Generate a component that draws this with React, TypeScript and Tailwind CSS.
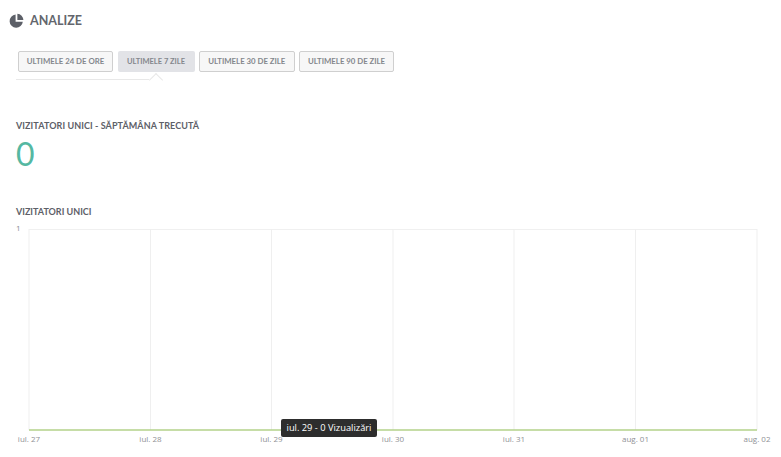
const ranges = [
  { label: "ULTIMELE 24 DE ORE", width: "w-[95px]", active: false },
  { label: "ULTIMELE 7 ZILE", width: "w-[77px]", active: true },
  { label: "ULTIMELE 30 DE ZILE", width: "w-[95.5px]", active: false },
  { label: "ULTIMELE 90 DE ZILE", width: "w-[95px]", active: false },
];

const ticks = [
  { x: 29, label: "iul. 27" },
  { x: 150.5, label: "iul. 28" },
  { x: 271.5, label: "iul. 29" },
  { x: 393, label: "iul. 30" },
  { x: 514, label: "iul. 31" },
  { x: 635.5, label: "aug. 01" },
  { x: 757, label: "aug. 02" },
];

function PieIcon() {
  return (
    <svg width="15" height="15" viewBox="0 0 15 15" className="shrink-0">
      <path d="M6.6 1.6v7.2h7.2A6.6 6.6 0 1 1 6.6 1.6z" fill="#5d6068" />
      <path d="M8.4 0.8a6.4 6.4 0 0 1 6 6.1h-6z" fill="#5d6068" />
    </svg>
  );
}

function Chart() {
  return (
    <div className="relative mt-[5px] w-[781px] h-[230px]">
      <svg width="781" height="230" className="block font-['Open_Sans',sans-serif]">
        <text x="16" y="9" fontSize="8" fill="#8a8d93">
          1
        </text>
        <line x1="29" x2="757" y1="7.5" y2="7.5" stroke="#f0f0f0" />
        {ticks.map((t) => (
          <line key={t.x} x1={t.x} x2={t.x} y1="7" y2="208" stroke="#efefef" />
        ))}
        <line x1="29" x2="757" y1="208" y2="208" stroke="#b3d28a" strokeWidth="1.5" />
        {ticks.map((t) => (
          <text key={t.label} x={t.x} y="220" fontSize="8" fill="#8f9196" textAnchor="middle">
            {t.label}
          </text>
        ))}
      </svg>
      <div className="absolute left-[281px] top-[197px] w-[96px] h-[18px] rounded-[2px] bg-[#2d2d2d] flex items-center justify-center font-['Open_Sans',sans-serif] text-[9.3px] text-white whitespace-nowrap">
        iul. 29 - 0 Vizualizări
      </div>
    </div>
  );
}

export default function App() {
  return (
    <div className="w-[781px] h-[457px] overflow-hidden bg-white font-['Lato',sans-serif]">
      <div className="flex items-center gap-[6px] pl-[9px] pt-[13px] h-[28px]">
        <PieIcon />
        <h1 className="mt-[2px] text-[12.5px] leading-none font-bold text-[#63666d]">ANALIZE</h1>
      </div>

      <div className="relative ml-[16px] mt-[23px] w-[400px] h-[32px]">
        <div className="flex gap-[4.5px] pl-[2px]">
          {ranges.map((r) =>
            r.active ? (
              <button
                key={r.label}
                className={`${r.width} h-[21px] rounded-[2px] bg-[#e2e3e7] text-[7.5px] font-bold text-[#84878d] whitespace-nowrap`}
              >
                {r.label}
              </button>
            ) : (
              <button
                key={r.label}
                className={`${r.width} h-[21px] rounded-[2px] border border-[#cfcfcf] bg-[#f7f7f7] text-[7.8px] font-bold text-[#84878d] whitespace-nowrap`}
              >
                {r.label}
              </button>
            ),
          )}
        </div>
        <div className="absolute left-0 top-[28px] w-[133px] h-px bg-[#e8e8e8]" />
        <div className="absolute left-[135px] top-[24px] w-[10px] h-[10px] rotate-45 border-l border-t border-[#e8e8e8] bg-white" />
      </div>

      <h2 className="ml-[16px] mt-[37px] text-[9px] leading-[11px] font-bold tracking-[0.08px] text-[#5d6068]">
        VIZITATORI UNICI - SĂPTĂMÂNA TRECUTĂ
      </h2>
      <div className="ml-[16px] mt-[3px] text-[32px] leading-[40px] text-[#55b8a2]">0</div>

      <h2 className="ml-[16px] mt-[32px] text-[9px] leading-[11px] font-bold text-[#5d6068]">
        VIZITATORI UNICI
      </h2>
      <Chart />
    </div>
  );
}
